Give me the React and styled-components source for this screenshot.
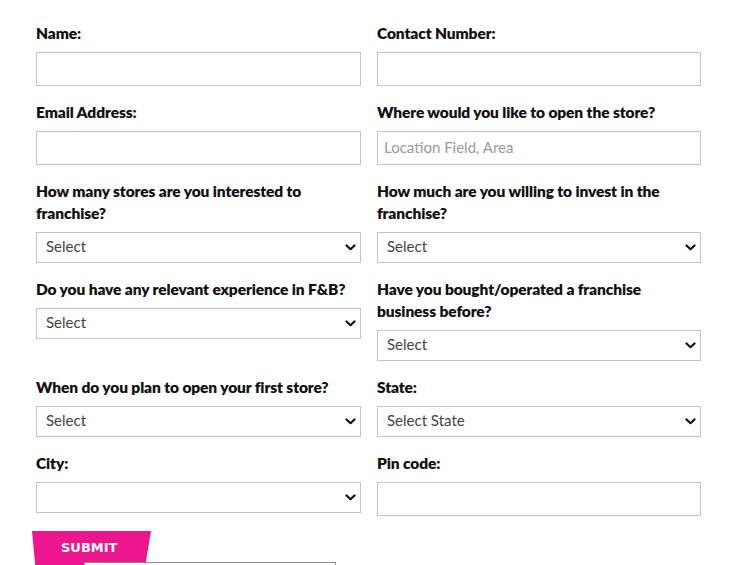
import styled, { createGlobalStyle } from 'styled-components';

const GlobalStyle = createGlobalStyle`
  html, body {
    margin: 0;
    padding: 0;
    background: #fff;
    overflow: hidden;
  }
  body {
    font-family: Lato, "Liberation Sans", sans-serif;
    color: #111;
  }
`;

const fields = [
  { label: 'Name:', type: 'input' },
  { label: 'Contact Number:', type: 'input' },
  { label: 'Email Address:', type: 'input' },
  { label: 'Where would you like to open the store?', type: 'input', placeholder: 'Location Field, Area' },
  { label: 'How many stores are you interested to franchise?', type: 'select', value: 'Select' },
  { label: 'How much are you willing to invest in the franchise?', type: 'select', value: 'Select' },
  { label: 'Do you have any relevant experience in F&B?', type: 'select', value: 'Select' },
  { label: 'Have you bought/operated a franchise business before?', type: 'select', value: 'Select' },
  { label: 'When do you plan to open your first store?', type: 'select', value: 'Select' },
  { label: 'State:', type: 'select', value: 'Select State' },
  { label: 'City:', type: 'select', value: '' },
  { label: 'Pin code:', type: 'input' },
];

function Chevron() {
  return (
    <ChevronIcon width="11" height="7" viewBox="0 0 11 7">
      <path d="M1.5 1.5 L5.5 5.2 L9.5 1.5" fill="none" stroke="#111" strokeWidth="2.2" strokeLinecap="round" strokeLinejoin="round" />
    </ChevronIcon>
  );
}

export default function App() {
  return (
    <>
      <GlobalStyle />
      <FormWrapper>
        <FieldGrid>
          {fields.map((f) => (
            <Field key={f.label}>
              <Label>{f.label}</Label>
              {f.type === 'input' ? (
                <TextInput type="text" placeholder={f.placeholder} />
              ) : (
                <SelectWrap>
                  <Select defaultValue={f.value}>
                    <option value={f.value}>{f.value}</option>
                  </Select>
                  <Chevron />
                </SelectWrap>
              )}
            </Field>
          ))}
        </FieldGrid>
        <SubmitRow>
          <SubmitButton type="button">SUBMIT</SubmitButton>
          <Captcha />
        </SubmitRow>
      </FormWrapper>
    </>
  );
}

const FormWrapper = styled.div`
  padding: 22px 49px 0 36px;
`;

const FieldGrid = styled.div`
  display: grid;
  grid-template-columns: 325px 324px;
  column-gap: 16px;
  row-gap: 15px;
  align-items: start;
`;

const Field = styled.div`
  display: flex;
  flex-direction: column;
  gap: 8px;
`;

const Label = styled.label`
  max-width: 315px;
  font-size: 15.5px;
  font-weight: 800;
  line-height: 22px;
  letter-spacing: -0.1px;
  color: #111;
`;

const TextInput = styled.input`
  box-sizing: border-box;
  width: 100%;
  height: 34px;
  margin: 0;
  padding: 0 6px 3px;
  border: 1px solid #c4c4c4;
  border-radius: 0;
  font-family: Lato, "Liberation Sans", sans-serif;
  font-size: 15px;
  color: #333;
  outline: none;

  &::placeholder {
    color: #9b9b9b;
  }
`;

const SelectWrap = styled.div`
  position: relative;
`;

const Select = styled.select`
  box-sizing: border-box;
  width: 100%;
  height: 31px;
  margin: 0;
  padding: 0 9px 3px;
  border: 1px solid #c4c4c4;
  border-radius: 0;
  background: #fff;
  appearance: none;
  font-family: Lato, "Liberation Sans", sans-serif;
  font-size: 15px;
  color: #444;
  outline: none;
`;

const ChevronIcon = styled.svg`
  position: absolute;
  right: 5px;
  top: 12px;
  pointer-events: none;
`;

const SubmitRow = styled.div`
  position: relative;
  margin-top: 15px;
  height: 60px;
`;

const SubmitButton = styled.button`
  display: block;
  margin-left: -4px;
  width: 119px;
  height: 44px;
  padding: 0 0 10px 29px;
  border: none;
  background: #ec168f;
  clip-path: polygon(0 0, 100% 0, 94% 100%, 3.5% 100%);
  color: #fff;
  font-family: "DejaVu Sans", Verdana, sans-serif;
  font-size: 13px;
  font-weight: 700;
  line-height: 16px;
  text-align: left;
  cursor: pointer;
`;

const Captcha = styled.div`
  position: absolute;
  left: 48px;
  top: 31px;
  width: 250px;
  height: 76px;
  border: 1px solid #8e8e8e;
  background: #fff;
`;
